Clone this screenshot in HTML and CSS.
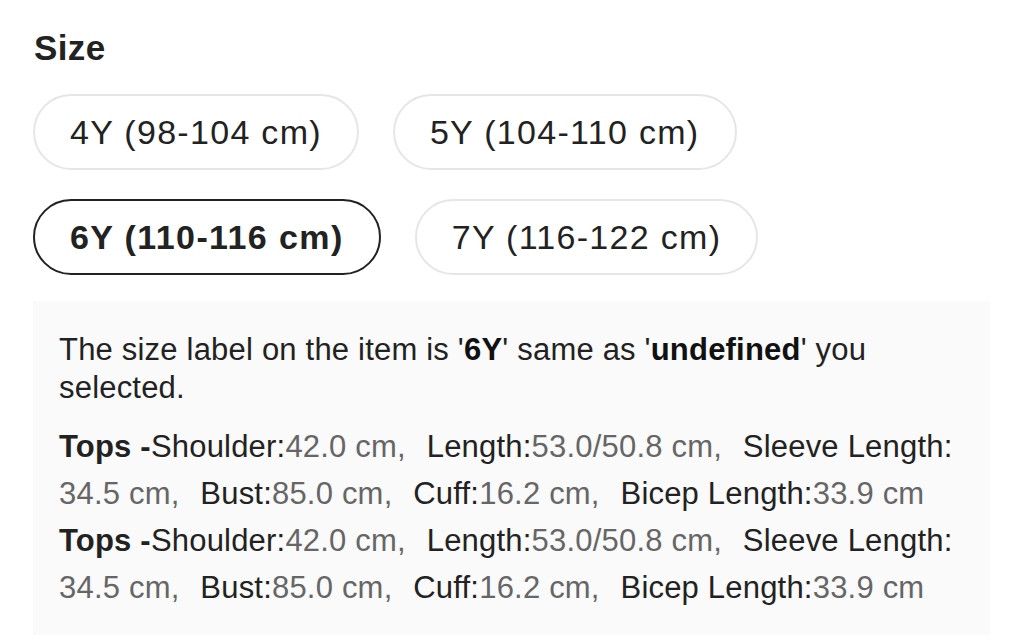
FILE: index.html
```html
<!DOCTYPE html>
<html lang="en">
<head>
<meta charset="utf-8">
<title>Size</title>
<link rel="stylesheet" href="styles.css">
</head>
<body>
<section class="size-panel">
  <h2 class="size-title">Size</h2>
  <div class="size-options">
    <button class="size-btn">4Y (98-104 cm)</button>
    <button class="size-btn">5Y (104-110 cm)</button>
    <button class="size-btn is-selected">6Y (110-116 cm)</button>
    <button class="size-btn">7Y (116-122 cm)</button>
  </div>
  <div class="size-info">
    <p class="size-note">The size label on the item is '<b>6Y</b>' same as '<b>undefined</b>' you selected.</p>
    <p class="measure">
      <b>Tops -</b><span class="item"><span class="lbl">Shoulder:</span><wbr><span class="val">42.0 cm,</span></span>
      <span class="item"><span class="lbl">Length:</span><wbr><span class="val">53.0/50.8 cm,</span></span>
      <span class="item"><span class="lbl">Sleeve Length:</span><wbr><span class="val">34.5 cm,</span></span>
      <span class="item"><span class="lbl">Bust:</span><wbr><span class="val">85.0 cm,</span></span>
      <span class="item"><span class="lbl">Cuff:</span><wbr><span class="val">16.2 cm,</span></span>
      <span class="item"><span class="lbl">Bicep Length:</span><wbr><span class="val">33.9 cm</span></span>
    </p>
    <p class="measure">
      <b>Tops -</b><span class="item"><span class="lbl">Shoulder:</span><wbr><span class="val">42.0 cm,</span></span>
      <span class="item"><span class="lbl">Length:</span><wbr><span class="val">53.0/50.8 cm,</span></span>
      <span class="item"><span class="lbl">Sleeve Length:</span><wbr><span class="val">34.5 cm,</span></span>
      <span class="item"><span class="lbl">Bust:</span><wbr><span class="val">85.0 cm,</span></span>
      <span class="item"><span class="lbl">Cuff:</span><wbr><span class="val">16.2 cm,</span></span>
      <span class="item"><span class="lbl">Bicep Length:</span><wbr><span class="val">33.9 cm</span></span>
    </p>
  </div>
</section>
</body>
</html>
```

FILE: styles.css
```css
* { box-sizing: border-box; }
html, body { margin: 0; padding: 0; background: #fff; }
body {
  font-family: "Liberation Sans", Arial, Helvetica, sans-serif;
  color: #222;
}
.size-panel {
  padding: 26px 34px 0 33px;
}
.size-title {
  margin: 0;
  font-size: 35px;
  font-weight: 700;
  line-height: 44px;
  padding-left: 1px;
  letter-spacing: 0.4px;
}
.size-options {
  display: flex;
  flex-wrap: wrap;
  column-gap: 34px;
  row-gap: 29px;
  margin-top: 24px;
}
.size-btn {
  font-family: inherit;
  font-size: 34px;
  letter-spacing: 1.3px;
  color: #222;
  background: #fff;
  border: 2px solid #e6e6e6;
  border-radius: 40px;
  height: 76px;
  padding: 0 35px;
  line-height: 1;
}
.size-btn.is-selected {
  border: 2.5px solid #222;
  font-weight: 700;
  letter-spacing: 1.4px;
}
.size-info {
  margin-top: 26px;
  background: #fafafa;
  padding: 30px 26px 24px 26px;
  font-size: 31px;
}
.size-note {
  margin: 0 0 16px;
  line-height: 38px;
  letter-spacing: 0.2px;
}
.size-note b { font-weight: 700; color: #111; }
.measure {
  margin: 0;
  line-height: 47px;
  letter-spacing: 0.2px;
}
.measure b { font-weight: 700; }
.item { margin-right: 12px; }
.lbl, .val { white-space: nowrap; }
.val { color: #666; }
```
